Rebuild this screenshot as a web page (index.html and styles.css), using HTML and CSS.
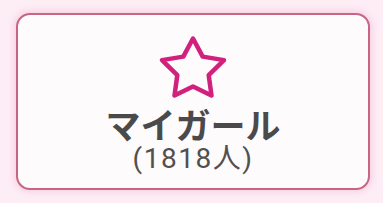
FILE: index.html
```html
<!DOCTYPE html>
<html lang="ja">
<head>
<meta charset="utf-8">
<link rel="stylesheet" href="styles.css">
</head>
<body>
<div class="card">
  <svg class="star" width="70" height="64" viewBox="-35 -35 70 64">
    <polygon points="0,-31.5 9.7,-13.35 31,-9.9 15.69,5.1 18.5,25.5 0,16.5 -18.5,25.5 -15.69,5.1 -31,-9.9 -9.7,-13.35" fill="none" stroke="#d1217c" stroke-width="4.5" stroke-linejoin="round"/>
  </svg>
  <div class="title">マイガール</div>
  <div class="count">(1818人)</div>
</div>
</body>
</html>
```
FILE: styles.css
```css
html, body {
  margin: 0;
  padding: 0;
}
body {
  background: #fdedf5;
  width: 383px;
  height: 203px;
  overflow: hidden;
  padding: 13px 0 0 16px;
  box-sizing: border-box;
  font-family: "Noto Sans CJK JP", "Noto Sans", sans-serif;
}
.card {
  width: 354px;
  height: 177px;
  box-sizing: border-box;
  border: 2px solid #c76683;
  border-radius: 14px;
  background: #fefbfd;
  box-shadow: 0 0 6px 2px rgba(245, 170, 205, 0.45);
  display: flex;
  flex-direction: column;
  align-items: center;
  padding-top: 20px;
}
.star {
  display: block;
}
.title {
  font-size: 35px;
  font-weight: 700;
  color: #4b4a4b;
  line-height: 36px;
  margin-top: 7px;
}
.count {
  font-family: Roboto, "Noto Sans CJK JP", sans-serif;
  font-size: 28px;
  letter-spacing: 1.5px;
  color: #505050;
  line-height: 30px;
  margin-top: 2px;
}
```
